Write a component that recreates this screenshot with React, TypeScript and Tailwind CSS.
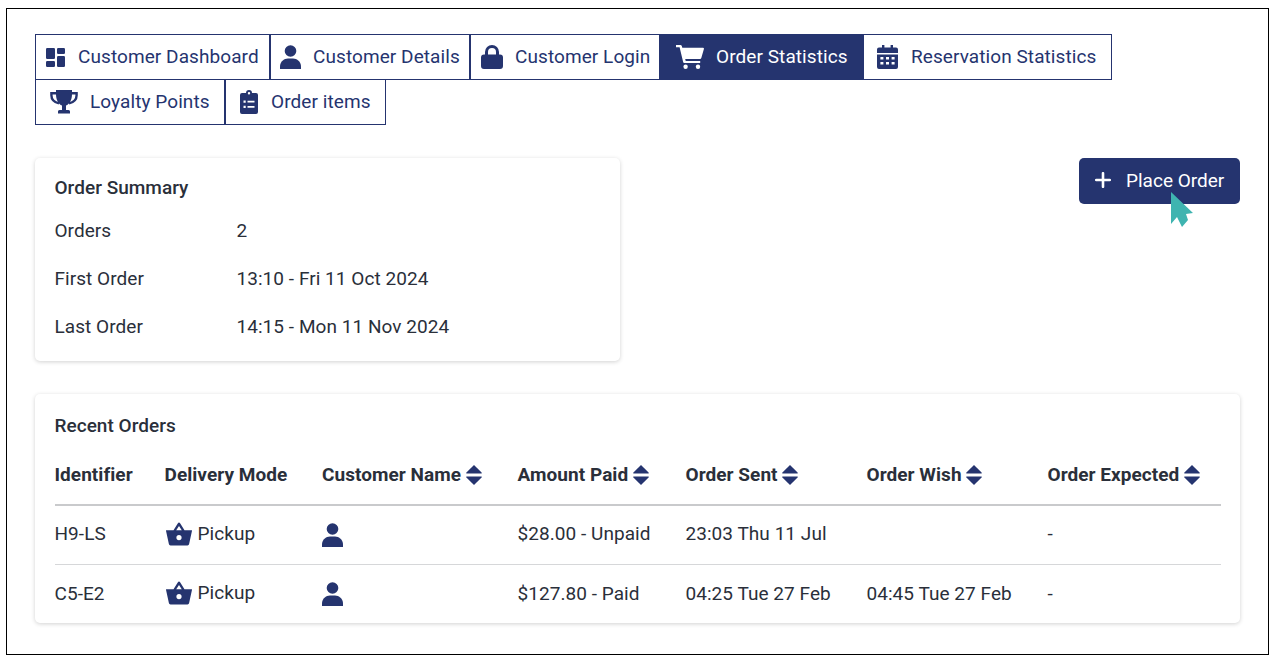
import React from "react";

const Dash = ({ className = "" }: { className?: string }) => (
  <svg viewBox="0 0 19 19" className={className} fill="currentColor">
    <rect x="0" y="0" width="9" height="11" rx="1.2" />
    <rect x="0" y="13" width="9" height="6" rx="1.2" />
    <rect x="11" y="0" width="8" height="6" rx="1.2" />
    <rect x="11" y="8" width="8" height="11" rx="1.2" />
  </svg>
);
const Person = ({ className = "" }: { className?: string }) => (
  <svg viewBox="0 0 21 24" className={className} fill="currentColor">
    <circle cx="10.5" cy="6" r="5.8" />
    <path d="M0 24v-2.5C0 16.5 4 13.5 8 13.5h5c4 0 8 3 8 8V24z" />
  </svg>
);
const Lock = ({ className = "" }: { className?: string }) => (
  <svg viewBox="0 0 22 24" className={className} fill="currentColor">
    <path fillRule="evenodd" d="M4 9.500V7a7 7 0 0 1 14 0v2.500h1a3 3 0 0 1 3 3V21a3 3 0 0 1-3 3H3a3 3 0 0 1-3-3v-8.500a3 3 0 0 1 3-3zm3 0h8V7a4 4 0 0 0-8 0z" />
  </svg>
);
const Cart = ({ className = "" }: { className?: string }) => (
  <svg viewBox="0 0 28 24" className={className} fill="currentColor">
    <path d="M0 0h4.400c.7 0 1.200.4 1.400 1l.5 1.700H27c.7 0 1.100.6.9 1.200l-2.600 9.200c-.2.6-.7 1-1.300 1H9.200l.5 1.900h14.500v2H8.200c-.5 0-.9-.3-1-.8L3.600 2.200H0z" />
    <circle cx="9.600" cy="21.800" r="2.200" />
    <circle cx="22" cy="21.800" r="2.200" />
  </svg>
);
const Calendar = ({ className = "" }: { className?: string }) => (
  <svg viewBox="0 0 21 24" className={className} fill="currentColor">
    <path fillRule="evenodd" d="M5 0h2.400v2.600h6.200V0H16v2.600h3a2 2 0 0 1 2 2V8H0V4.600a2 2 0 0 1 2-2h3zM0 9.400h21V22a2 2 0 0 1-2 2H2a2 2 0 0 1-2-2zM3.400 12v2.600h3V12zm5.600 0v2.600h3V12zm5.600 0v2.600h3V12zM3.400 17v2.600h3V17zm5.600 0v2.600h3V17zm5.600 0v2.600h3V17z" />
  </svg>
);
const Trophy = ({ className = "" }: { className?: string }) => (
  <svg viewBox="0 0 28 24" className={className} fill="currentColor">
    <path d="M6 0h16v4c0 6-2.600 10.200-6 11.600V20h2.500c1 0 1.500.8 1.500 1.800V23.500H8v-1.700c0-1 .5-1.800 1.500-1.800H12v-4.400C8.600 14.200 6 10 6 4z" />
    <path d="M6.500 3.200H1.400v2c0 4 3 7 7.600 8.200M21.500 3.200h5.100v2c0 4-3 7-7.600 8.200" fill="none" stroke="currentColor" strokeWidth="2.400" />
  </svg>
);
const Clipboard = ({ className = "" }: { className?: string }) => (
  <svg viewBox="0 0 18 24" className={className} fill="currentColor">
    <path fillRule="evenodd" d="M9 0a3 3 0 0 1 3 3h4a2 2 0 0 1 2 2v17a2 2 0 0 1-2 2H2a2 2 0 0 1-2-2V5a2 2 0 0 1 2-2h4a3 3 0 0 1 3-3zm0 2a1.200 1.200 0 1 0 0 2.400A1.200 1.200 0 0 0 9 2zM3.500 10.500v2.200h2.200v-2.200zm4 .2v1.800h7v-1.800zm-4 5v2.200h2.200v-2.200zm4 .2v1.800h7v-1.800z" />
  </svg>
);
const Basket = ({ className = "" }: { className?: string }) => (
  <svg viewBox="0 0 27 24" className={className} fill="currentColor">
    <path fillRule="evenodd" d="M13.500 0c.4 0 .8.200 1 .6L19.200 8H26.500c.4 0 .6.300.5.700L24 22.500c-.2.900-.8 1.500-1.700 1.500H4.700c-.9 0-1.500-.6-1.700-1.500L0 8.700C-.1 8.300.1 8 .5 8h7.300L12.500.6c.2-.4.600-.6 1-.6zm0 3.600L10.600 8h5.800zm0 9.400a2.700 2.700 0 1 0 0 5.400 2.700 2.700 0 0 0 0-5.400z" />
  </svg>
);
const Sort = () => (
  <svg viewBox="0 0 16 20" className="w-[16px] h-[20px] shrink-0 text-[#25346f]" fill="currentColor">
    <path d="M8 0l7.600 7.400c.4.500.1 1.100-.5 1.100H.9c-.6 0-.9-.6-.5-1.100z" />
    <path d="M8 20L.4 12.600c-.4-.5-.1-1.100.5-1.100h14.200c.6 0 .9.600.5 1.100z" />
  </svg>
);
const Plus = () => (
  <svg viewBox="0 0 16 16" className="w-[16px] h-[16px] -mt-[2px]" fill="none" stroke="currentColor" strokeWidth="2.600" strokeLinecap="round">
    <path d="M8 1.200v13.600M1.200 8h13.600" />
  </svg>
);
const Pointer = () => (
  <svg viewBox="0 0 24 37" className="w-[24px] h-[37px]" fill="#3fb4b0">
    <path d="M0 0L22 21L15 22L17 28L11 35L6 25L0 32z" />
  </svg>
);

type Tab = { label: string; icon: React.ReactNode; w: string; gap: string; active?: boolean };

const row1: Tab[] = [
  { label: "Customer Dashboard", icon: <Dash className="w-[19px] h-[19px]" />, w: "w-[235px]", gap: "gap-[13px] pl-[10px]" },
  { label: "Customer Details", icon: <Person className="w-[21px] h-[24px]" />, w: "w-[200px]", gap: "gap-[12px] pl-[9px]" },
  { label: "Customer Login", icon: <Lock className="w-[22px] h-[24px]" />, w: "w-[190px]", gap: "gap-[12px] pl-[10px]" },
  { label: "Order Statistics", icon: <Cart className="w-[28px] h-[24px]" />, w: "w-[203px]", gap: "gap-[12px] pl-[15px]", active: true },
  { label: "Reservation Statistics", icon: <Calendar className="w-[21px] h-[24px]" />, w: "w-[249px]", gap: "gap-[13px] pl-[13px]" },
];
const row2: Tab[] = [
  { label: "Loyalty Points", icon: <Trophy className="w-[28px] h-[24px]" />, w: "w-[190px]", gap: "gap-[12px] pl-[14px]" },
  { label: "Order items", icon: <Clipboard className="w-[18px] h-[24px]" />, w: "w-[161px]", gap: "gap-[13px] pl-[14px]" },
];

function TabButton({ t }: { t: Tab }) {
  return (
    <div
      className={`h-[46px] -mb-px flex items-center border border-[#25346f] text-[19px] tracking-[0.08px] ${t.w} ${t.gap} ${
        t.active ? "bg-[#25346f] text-white" : "bg-white text-[#25346f]"
      }`}
    >
      <span className="shrink-0">{t.icon}</span>
      <span className="whitespace-nowrap">{t.label}</span>
    </div>
  );
}

const cardCls = "bg-white rounded-[5px] shadow-[0_1px_4px_rgba(0,0,0,0.18)]";

const headers = [
  { t: "Identifier", w: "w-[110px]" },
  { t: "Delivery Mode", w: "w-[157.5px]" },
  { t: "Customer Name", w: "w-[195.5px]", s: true },
  { t: "Amount Paid", w: "w-[168px]", s: true },
  { t: "Order Sent", w: "w-[181px]", s: true },
  { t: "Order Wish", w: "w-[181px]", s: true },
  { t: "Order Expected", w: "w-[173.5px]", s: true },
];

const rows = [
  { id: "H9-LS", amount: "$28.00 - Unpaid", sent: "23:03 Thu 11 Jul", wish: "" },
  { id: "C5-E2", amount: "$127.80 - Paid", sent: "04:25 Tue 27 Feb", wish: "04:45 Tue 27 Feb" },
];

export default function App() {
  return (
    <div className="w-[1275px] h-[664px] bg-white pt-[8px] pl-[6px] overflow-hidden font-['Roboto',sans-serif] text-[#2a2f3a]">
      <div className="relative w-[1263px] h-[647px] border border-black pt-[25px] pl-[28px] pr-[28px]">
        <div className="flex flex-col">
          <div className="flex">{row1.map((t) => <TabButton key={t.label} t={t} />)}</div>
          <div className="flex">{row2.map((t) => <TabButton key={t.label} t={t} />)}</div>
        </div>

        <div className="mt-[34px] flex items-start justify-between">
          <div className={`${cardCls} w-[585px] h-[203px] pl-[19.5px] pr-[20px] pt-[19px]`}>
            <h2 className="text-[19px] leading-[21px] font-medium tracking-[0.03px]">Order Summary</h2>
            <dl className="mt-[17px] text-[19px] tracking-[0.05px]">
              {[
                ["Orders", "2"],
                ["First Order", "13:10 - Fri 11 Oct 2024"],
                ["Last Order", "14:15 - Mon 11 Nov 2024"],
              ].map(([k, v]) => (
                <div key={k} className="flex h-[48px] pt-[2px]">
                  <dt className="w-[182px]">{k}</dt>
                  <dd>{v}</dd>
                </div>
              ))}
            </dl>
          </div>
          <div className="relative">
            <button className="flex items-center w-[161px] h-[46px] rounded-[5px] bg-[#25346f] text-white text-[19px] pl-[16px] gap-[15px]">
              <Plus />
              <span>Place Order</span>
            </button>
            <div className="absolute left-[92px] top-[34px]">
              <Pointer />
            </div>
          </div>
        </div>

        <div className={`${cardCls} mt-[33px] w-[1205px] h-[229px] pl-[19.5px] pr-[20px] pt-[21px]`}>
          <h2 className="text-[19px] leading-[21px] font-medium tracking-[0.03px]">Recent Orders</h2>
          <table className="mt-[10px] w-[1166.5px] table-fixed border-collapse text-[19px] tracking-[0.05px]">
            <thead>
              <tr className="h-[59px] border-b-2 border-[#c9cacc]">
                {headers.map((h) => (
                  <th key={h.t} className={`${h.w} p-0 text-left font-bold`}>
                    <span className="flex items-center gap-[4.5px]">
                      <span className="whitespace-nowrap">{h.t}</span>
                      {h.s && <Sort />}
                    </span>
                  </th>
                ))}
              </tr>
            </thead>
            <tbody>
              {rows.map((r, i) => {
                const text = i === 0 ? "p-0 pb-[2px]" : "p-0";
                return (
                  <tr key={r.id} className={`h-[59px] ${i === 0 ? "border-b border-[#d6d7d9]" : ""}`}>
                    <td className={text}>{r.id}</td>
                    <td className="p-0">
                      <span className="flex items-center gap-[6px]">
                        <Basket className="w-[26px] h-[24px] ml-[1px] mb-[2px] text-[#25346f]" />
                        <span className="-mt-[2px]">Pickup</span>
                      </span>
                    </td>
                    <td className="p-0">
                      <Person className="w-[21px] h-[24px] text-[#25346f]" />
                    </td>
                    <td className={text}>{r.amount}</td>
                    <td className={text}>{r.sent}</td>
                    <td className={text}>{r.wish}</td>
                    <td className={text}>-</td>
                  </tr>
                );
              })}
            </tbody>
          </table>
        </div>
      </div>
    </div>
  );
}
